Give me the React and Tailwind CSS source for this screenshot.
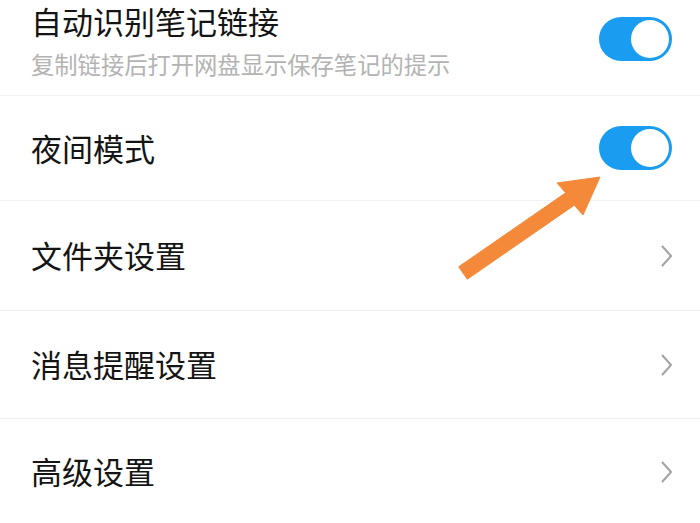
import React from "react";

const font = { fontFamily: '"Noto Sans CJK SC", "Noto Sans", sans-serif' };

function Toggle({ className = "" }) {
  return (
    <div className={`w-[73px] h-[44px] rounded-full bg-[#1a9cf0] flex items-center justify-end pr-[3px] shrink-0 ${className}`}>
      <div className="w-[38px] h-[38px] rounded-full bg-white" />
    </div>
  );
}

function Chevron() {
  return (
    <svg width="12" height="22" viewBox="0 0 12 22" className="shrink-0">
      <path d="M1.5 1.5 L10 11 L1.5 20.5" fill="none" stroke="#a3a3a3" strokeWidth="2" strokeLinecap="round" strokeLinejoin="round" />
    </svg>
  );
}

function LinkRow({ label, h, shift = "" }) {
  return (
    <div className={`${h} border-b border-[#f1f1f1] flex items-center justify-between pl-[31px] pr-[27px]`}>
      <span className={`text-[31px] leading-[40px] text-[#141414] ${shift}`}>{label}</span>
      <Chevron />
    </div>
  );
}

export default function App() {
  return (
    <div className="relative w-[700px] h-[523px] overflow-hidden bg-white" style={font}>
      <div className="h-[96px] border-b border-[#f1f1f1] flex items-start justify-between pl-[31px] pr-[28px]">
        <div className="flex flex-col pt-[2px]">
          <span className="text-[31px] leading-[38px] text-[#141414]">自动识别笔记链接</span>
          <span className="mt-[9px] text-[23.3px] leading-[30px] text-[#b3b3b3]">复制链接后打开网盘显示保存笔记的提示</span>
        </div>
        <Toggle className="mt-[17px]" />
      </div>
      <div className="h-[105px] border-b border-[#f1f1f1] flex items-center justify-between pl-[31px] pr-[28px]">
        <span className="text-[31px] leading-[40px] text-[#141414]">夜间模式</span>
        <Toggle />
      </div>
      <LinkRow label="文件夹设置" h="h-[110px]" shift="-mt-[1px]" />
      <LinkRow label="消息提醒设置" h="h-[108px]" shift="-mt-[2px]" />
      <LinkRow label="高级设置" h="h-[106px]" shift="-mt-[1px]" />
      <svg className="absolute left-0 top-0 pointer-events-none" width="700" height="523" viewBox="0 0 700 523">
        <polygon
          points="600,177 583,215 574.3,205.2 467.3,279.2 458.7,266.8 565.7,192.8 557,183"
          fill="#f5893a"
          stroke="#f5893a"
          strokeWidth="1"
          strokeLinejoin="round"
        />
      </svg>
    </div>
  );
}
